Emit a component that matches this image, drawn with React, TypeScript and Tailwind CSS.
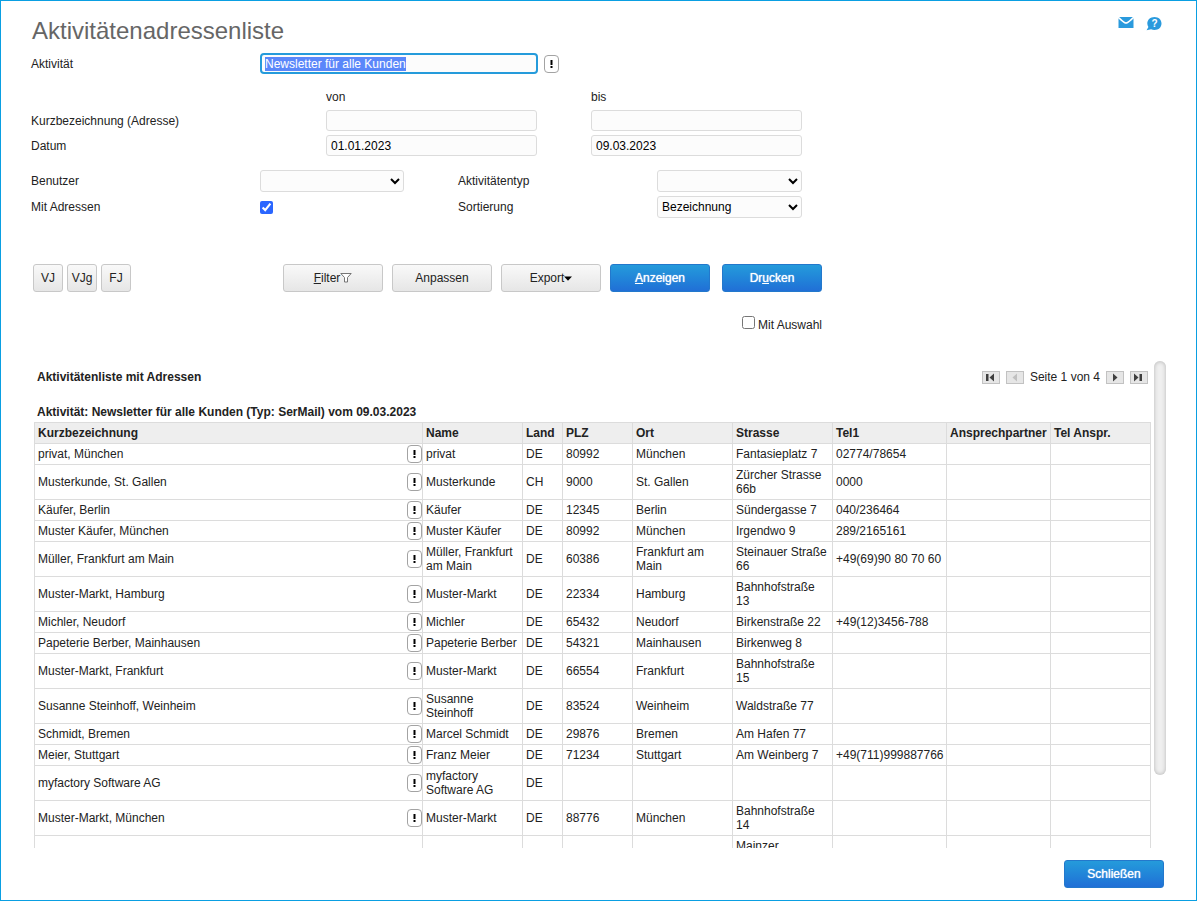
import { useEffect, useRef } from 'react';
import type { ReactNode } from 'react';

type Row = {
  key: string;
  name: string;
  land: string;
  plz: string;
  ort: string;
  strasse: string;
  tel: string;
};

const row = (key: string, name: string, land: string, plz: string, ort: string, strasse: string, tel = ''): Row => ({
  key, name, land, plz, ort, strasse, tel,
});

const rows: Row[] = [
  row('privat, München', 'privat', 'DE', '80992', 'München', 'Fantasieplatz 7', '02774/78654'),
  row('Musterkunde, St. Gallen', 'Musterkunde', 'CH', '9000', 'St. Gallen', 'Zürcher Strasse 66b', '0000'),
  row('Käufer, Berlin', 'Käufer', 'DE', '12345', 'Berlin', 'Sündergasse 7', '040/236464'),
  row('Muster Käufer, München', 'Muster Käufer', 'DE', '80992', 'München', 'Irgendwo 9', '289/2165161'),
  row('Müller, Frankfurt am Main', 'Müller, Frankfurt am Main', 'DE', '60386', 'Frankfurt am Main', 'Steinauer Straße 66', '+49(69)90 80 70 60'),
  row('Muster-Markt, Hamburg', 'Muster-Markt', 'DE', '22334', 'Hamburg', 'Bahnhofstraße 13'),
  row('Michler, Neudorf', 'Michler', 'DE', '65432', 'Neudorf', 'Birkenstraße 22', '+49(12)3456-788'),
  row('Papeterie Berber, Mainhausen', 'Papeterie Berber', 'DE', '54321', 'Mainhausen', 'Birkenweg 8'),
  row('Muster-Markt, Frankfurt', 'Muster-Markt', 'DE', '66554', 'Frankfurt', 'Bahnhofstraße 15'),
  row('Susanne Steinhoff, Weinheim', 'Susanne Steinhoff', 'DE', '83524', 'Weinheim', 'Waldstraße 77'),
  row('Schmidt, Bremen', 'Marcel Schmidt', 'DE', '29876', 'Bremen', 'Am Hafen 77'),
  row('Meier, Stuttgart', 'Franz Meier', 'DE', '71234', 'Stuttgart', 'Am Weinberg 7', '+49(711)999887766'),
  row('myfactory Software AG', 'myfactory Software AG', 'DE', '', '', ''),
  row('Muster-Markt, München', 'Muster-Markt', 'DE', '88776', 'München', 'Bahnhofstraße 14'),
  row('', '', '', '', '', 'Mainzer'),
];

const fieldClass = 'h-[21px] w-[211px] rounded-[3px] border border-[#dcdcdc] bg-[#fcfcfc] px-1 text-black outline-none';
const selectClass = 'h-[22px] rounded-[3px] border border-[#dcdcdc] bg-[#fcfcfc] text-black outline-none';
const cellClass = 'border border-[#dcdcdc] px-[3px] py-[3px]';

function DetailButton({ label, className = '' }: { label: string; className?: string }) {
  return (
    <button
      type="button"
      aria-label={label}
      className={`flex h-[18px] w-[15px] shrink-0 items-center justify-center rounded-[4px] border border-[#a3a3a3] bg-white ${className}`}
    >
      <svg width="3" height="8" viewBox="0 0 3 8" aria-hidden="true">
        <path d="M0.5 0h2v5h-2zM0.5 6h2v2h-2z" fill="#000" />
      </svg>
    </button>
  );
}

function GreyButton({ children, className = 'w-[100px]' }: { children: ReactNode; className?: string }) {
  return (
    <button
      type="button"
      className={`flex h-7 items-center justify-center rounded-[3px] border border-[#c8c8c8] bg-linear-to-b from-[#f9f9f9] to-[#e6e6e6] ${className}`}
    >
      {children}
    </button>
  );
}

function BlueButton({ children }: { children: ReactNode }) {
  return (
    <button
      type="button"
      className="h-7 w-[100px] rounded-[3px] border border-[#2378cc] bg-linear-to-b from-[#259bdb] to-[#216fd6] text-white"
    >
      <span className="[text-shadow:0_0_1px_#fff]">{children}</span>
    </button>
  );
}

function PageButton({ label, path, disabled = false }: { label: string; path: string; disabled?: boolean }) {
  return (
    <button
      type="button"
      aria-label={label}
      disabled={disabled}
      className="flex h-[13px] w-[18px] items-center justify-center border border-[#c2c2c2] bg-[#e6e6e6] text-[#3f3f3f] disabled:text-[#c0c0c0]"
    >
      <svg width="16" height="11" viewBox="0 0 16 11" aria-hidden="true">
        <path d={path} fill="currentColor" />
      </svg>
    </button>
  );
}

export default function App() {
  const activity = useRef<HTMLInputElement>(null);

  useEffect(() => {
    activity.current?.focus();
    activity.current?.select();
  }, []);

  return (
    <main className="flex h-screen flex-col border border-[#0a9fe2] bg-white pt-4 pb-3 font-['Liberation_Sans',Arial,sans-serif] text-[12px] leading-[14px] text-[#222]">
      <header className="flex items-start justify-between pr-[34px] pl-[31px]">
        <h1 className="text-[24px] leading-7 text-[#666]">Aktivitätenadressenliste</h1>
        <div className="flex items-start gap-3">
          <button type="button" aria-label="E-Mail">
            <svg width="16" height="12" viewBox="0 0 16 12">
              <path d="M0.500 0h15v11h-15z" fill="#2a9add" />
              <path d="M0 0.200C3 2.500 6 6 8 6s5-3.500 8-5.800" fill="none" stroke="#fff" strokeWidth="1.600" />
            </svg>
          </button>
          <button type="button" aria-label="Hilfe">
            <svg width="16" height="14" viewBox="0 0 16 14">
              <path d="M8.5 0C12.6 0 15.5 2.8 15.5 6.5S12.6 13 8.5 13C7.2 13 6.1 12.7 5.1 12.2L0.600 13.200 2.400 10C1.700 9 1.300 7.800 1.300 6.500 1.300 2.800 4.400 0 8.500 0z" fill="#2a9add" />
              <text x="8.500" y="10" textAnchor="middle" fontSize="10" fontWeight="bold" fill="#fff">?</text>
            </svg>
          </button>
        </div>
      </header>

      <form className="w-[821px] pl-[30px]" onSubmit={(e) => e.preventDefault()}>
        <div className="mt-2 flex items-center">
          <label htmlFor="activity" className="w-[229px]">Aktivität</label>
          <input
            id="activity"
            ref={activity}
            type="text"
            defaultValue="Newsletter für alle Kunden"
            className="h-[21px] w-[278px] rounded-[4px] border-2 border-[#259bdb] bg-[#fcfcfc] px-[3px] outline-none selection:bg-[#5a87fa] selection:text-white"
          />
          <DetailButton label="Aktivität auswählen" className="ml-1.5" />
        </div>

        <div className="mt-4 flex pl-[295px]">
          <span className="w-[265px]">von</span>
          <span>bis</span>
        </div>
        <div className="mt-1.5 flex items-center">
          <label htmlFor="short-from" className="w-[295px]">Kurzbezeichnung (Adresse)</label>
          <input id="short-from" type="text" className={fieldClass} />
          <input aria-label="Kurzbezeichnung bis" type="text" className={`ml-[54px] ${fieldClass}`} />
        </div>
        <div className="mt-1 flex items-center">
          <label htmlFor="date-from" className="w-[295px]">Datum</label>
          <input id="date-from" type="text" defaultValue="01.01.2023" className={fieldClass} />
          <input aria-label="Datum bis" type="text" defaultValue="09.03.2023" className={`ml-[54px] ${fieldClass}`} />
        </div>

        <div className="mt-3.5 flex items-center">
          <label htmlFor="user" className="w-[229px]">Benutzer</label>
          <select id="user" className={`w-[144px] ${selectClass}`}>
            <option></option>
          </select>
          <label htmlFor="type" className="ml-[54px] w-[199px]">Aktivitätentyp</label>
          <select id="type" className={`w-[145px] ${selectClass}`}>
            <option></option>
          </select>
        </div>
        <div className="mt-1 flex items-center">
          <label htmlFor="with-addresses" className="w-[229px]">Mit Adressen</label>
          <span className="flex w-[144px]">
            <input id="with-addresses" type="checkbox" defaultChecked className="size-[13px] accent-[#2a66ff]" />
          </span>
          <label htmlFor="sort" className="ml-[54px] w-[199px]">Sortierung</label>
          <select id="sort" className={`w-[145px] ${selectClass}`}>
            <option>Bezeichnung</option>
          </select>
        </div>

        <div className="mt-[46px] flex pl-0.5">
          <div className="flex gap-1">
            <GreyButton className="w-[30px]">VJ</GreyButton>
            <GreyButton className="w-[30px]">VJg</GreyButton>
            <GreyButton className="w-[30px]">FJ</GreyButton>
          </div>
          <div className="ml-auto flex gap-[9px]">
            <GreyButton>
              <span><u>F</u>ilter</span>
              <svg width="12" height="10" viewBox="0 0 12 10" aria-hidden="true">
                <path d="M0.800 0.500h10.400L7.500 4.500v4.500h-3V4.500z" fill="#fff" stroke="#666" strokeWidth="0.900" />
              </svg>
            </GreyButton>
            <GreyButton>Anpassen</GreyButton>
            <GreyButton>
              Export
              <svg width="8" height="5" viewBox="0 0 8 5" aria-hidden="true">
                <path d="M0 0.500h8L4 4.800z" fill="#000" />
              </svg>
            </GreyButton>
          </div>
          <div className="ml-[9px] flex gap-3">
            <BlueButton><u>A</u>nzeigen</BlueButton>
            <BlueButton>Dr<u>u</u>cken</BlueButton>
          </div>
        </div>

        <div className="mt-6 flex h-4 items-start justify-end gap-[3px]">
          <input id="with-selection" type="checkbox" className="size-[13px]" />
          <label htmlFor="with-selection" className="pt-0.5">Mit Auswahl</label>
        </div>
      </form>

      <section className="mt-[29px] flex min-h-0 flex-1 gap-[3px] pr-[30px] pl-[33px]">
        <div className="min-w-0 flex-1 overflow-hidden">
          <div className="flex h-8 items-center justify-between pr-[3px] pl-[3px]">
            <h2 className="font-bold">Aktivitätenliste mit Adressen</h2>
            <nav className="flex items-center gap-1.5" aria-label="Seiten">
              <PageButton label="Erste Seite" path="M3 2h2.500v7H3zM11 1.500v8L6.500 5.500z" />
              <PageButton label="Vorherige Seite" path="M10 1.500v8L5.500 5.500z" disabled />
              <span>Seite 1 von 4</span>
              <PageButton label="Nächste Seite" path="M6 1.500v8l4.500-4z" />
              <PageButton label="Letzte Seite" path="M3 1.500v8l4.500-4zM8.500 2H11v7H8.500z" />
            </nav>
          </div>
          <h3 className="mt-3 mb-[3px] pl-[3px] font-bold">
            Aktivität: Newsletter für alle Kunden (Typ: SerMail) vom 09.03.2023
          </h3>
          <table className="w-full table-fixed border-collapse">
            <colgroup>
              <col />
              <col className="w-[100px]" />
              <col className="w-[40px]" />
              <col className="w-[70px]" />
              <col className="w-[100px]" />
              <col className="w-[100px]" />
              <col className="w-[114px]" />
              <col className="w-[104px]" />
              <col className="w-[100px]" />
            </colgroup>
            <thead className="bg-[#eee] text-left whitespace-nowrap">
              <tr>
                {['Kurzbezeichnung', 'Name', 'Land', 'PLZ', 'Ort', 'Strasse', 'Tel1', 'Ansprechpartner', 'Tel Anspr.'].map((title) => (
                  <th key={title} className={cellClass}>{title}</th>
                ))}
              </tr>
            </thead>
            <tbody>
              {rows.map((r, i) => (
                <tr key={i}>
                  <td className="border border-[#dcdcdc] py-[3px] pl-[3px]">
                    <div className="flex items-center justify-between">
                      <span>{r.key}</span>
                      {r.key && <DetailButton label={`Details zu ${r.key}`} className="-my-0.5" />}
                    </div>
                  </td>
                  <td className={cellClass}>{r.name}</td>
                  <td className={cellClass}>{r.land}</td>
                  <td className={cellClass}>{r.plz}</td>
                  <td className={cellClass}>{r.ort}</td>
                  <td className={cellClass}>{r.strasse}</td>
                  <td className={`${cellClass} whitespace-nowrap`}>{r.tel}</td>
                  <td className={cellClass}></td>
                  <td className={cellClass}></td>
                </tr>
              ))}
            </tbody>
          </table>
        </div>
        <div className="h-[85%] w-3 rounded-full bg-[#efefef] shadow-[inset_0_0_4px_#b4b4b4]" />
      </section>

      <footer className="mt-3 flex justify-end pr-8">
        <BlueButton>Schließen</BlueButton>
      </footer>
    </main>
  );
}
